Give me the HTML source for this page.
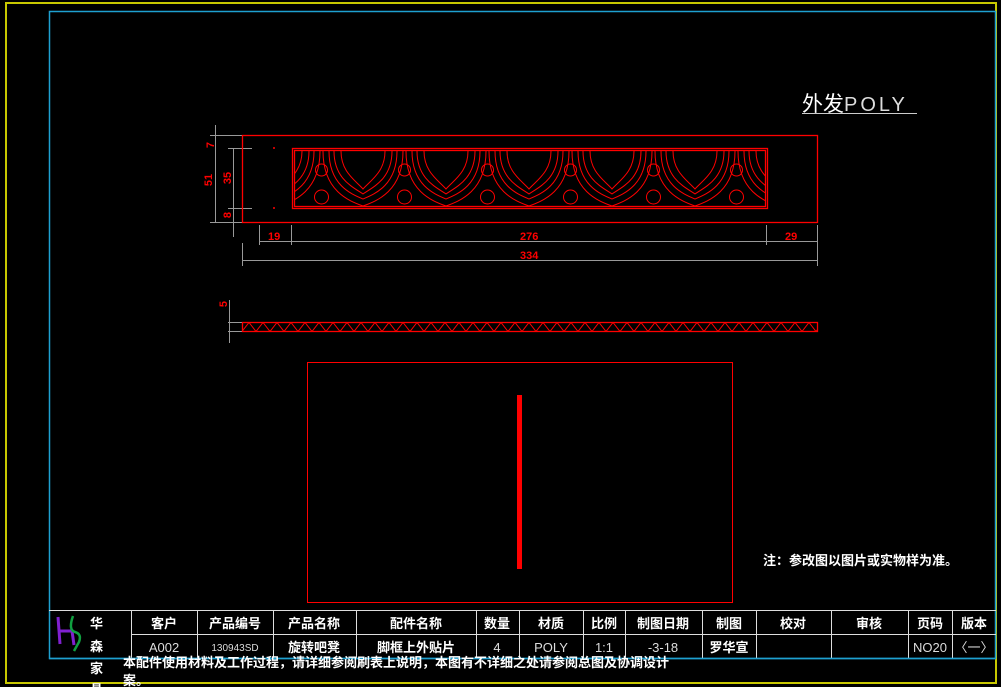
<!DOCTYPE html>
<html><head><meta charset="utf-8"><style>
html,body{margin:0;padding:0;background:#000;width:1001px;height:687px;overflow:hidden}
svg{display:block}
text{font-family:"Liberation Sans","Noto Sans CJK SC",sans-serif}
.w{fill:#fff;font-weight:bold;font-size:13px}
</style></head><body>
<svg width="1001" height="687" viewBox="0 0 1001 687">
<defs>
<g id="arch" fill="none" stroke="#f00" stroke-width="1">
<path d="M-22,151 C-22,172 -8,180 0,189 C8,180 22,172 22,151"/>
<path d="M-29,151 C-29,179 -10,187 0,194 C10,187 29,179 29,151"/>
<path d="M-34,151 C-34,185 -12,194 0,199 C12,194 34,185 34,151"/>
<path d="M-40,151 C-40,191 -14,201 0,206 C14,201 40,191 40,151"/>
<circle cx="-41.5" cy="170" r="6"/>
<circle cx="-41.5" cy="197" r="7"/>
</g>
<pattern id="zz" x="242" y="322" width="14" height="10" patternUnits="userSpaceOnUse">
<path d="M0,9.5 L7,0.5 L14,9.5" fill="none" stroke="#f00" stroke-width="1"/>
</pattern>
</defs>
<rect x="6" y="3" width="990" height="680" fill="none" stroke="#c8c800" stroke-width="2"/>
<rect x="49.5" y="11.5" width="946" height="647" fill="none" stroke="#1ea0d0" stroke-width="1.5"/>
<text x="802" y="111" fill="#fff" font-size="21">外发</text>
<text x="844" y="111" fill="#ddd" font-size="20" letter-spacing="3" font-weight="normal">POLY</text>
<line x1="802" y1="113.5" x2="917" y2="113.5" stroke="#ccc" stroke-width="1"/>
<svg x="294" y="0" width="472" height="210" viewBox="294 0 472 210" overflow="hidden">
<use href="#arch" x="280"/>
<use href="#arch" x="363"/>
<use href="#arch" x="446"/>
<use href="#arch" x="529"/>
<use href="#arch" x="612"/>
<use href="#arch" x="695"/>
<use href="#arch" x="778"/>
</svg>
<g stroke="#999" stroke-width="1" fill="none">
<line x1="210" y1="135.5" x2="242" y2="135.5"/>
<line x1="228" y1="148.5" x2="252" y2="148.5"/>
<line x1="228" y1="208.5" x2="252" y2="208.5"/>
<line x1="210" y1="222.5" x2="242" y2="222.5"/>
<line x1="215.5" y1="125" x2="215.5" y2="222"/>
<line x1="233.5" y1="148" x2="233.5" y2="237"/>
<line x1="259.5" y1="225" x2="259.5" y2="245"/>
<line x1="291.5" y1="225" x2="291.5" y2="245"/>
<line x1="766.5" y1="225" x2="766.5" y2="245"/>
<line x1="817.5" y1="225" x2="817.5" y2="266"/>
<line x1="242.5" y1="243" x2="242.5" y2="266"/>
<line x1="259" y1="241.5" x2="817" y2="241.5"/>
<line x1="242" y1="260.5" x2="817" y2="260.5"/>
<line x1="228" y1="322.5" x2="242" y2="322.5"/>
<line x1="228" y1="331.5" x2="242" y2="331.5"/>
<line x1="229.5" y1="300" x2="229.5" y2="343"/>
</g>
<g fill="none" stroke="#f00" stroke-width="1.3">
<rect x="242.5" y="135.5" width="575" height="87"/>
<rect x="292.5" y="148.5" width="475" height="60"/>
<rect x="294.5" y="150.5" width="471" height="56"/>
</g>
<circle cx="274" cy="148" r="1" fill="#f00"/><circle cx="274" cy="208" r="1" fill="#f00"/>
<g fill="#f00" font-weight="bold" font-size="11">
<text x="268" y="240">19</text>
<text x="520" y="240">276</text>
<text x="785" y="240">29</text>
<text x="520" y="259">334</text>
<text transform="translate(214,145) rotate(-90)" text-anchor="middle">7</text>
<text transform="translate(212,180) rotate(-90)" text-anchor="middle">51</text>
<text transform="translate(231,178) rotate(-90)" text-anchor="middle">35</text>
<text transform="translate(231,215) rotate(-90)" text-anchor="middle">8</text>
<text transform="translate(227,304) rotate(-90)" text-anchor="middle">5</text>
</g>
<rect x="242" y="322" width="576" height="10" fill="url(#zz)"/>
<rect x="242.5" y="322.5" width="575" height="9" fill="none" stroke="#f00" stroke-width="1.3"/>
<rect x="307.5" y="362.5" width="425" height="240" fill="none" stroke="#f00"/>
<rect x="517" y="395" width="5" height="174" fill="#f00"/>
<text x="763" y="565" class="w" font-size="12">注：参改图以图片或实物样为准。</text>
<g stroke="#ddd" stroke-width="1" fill="none">
<line x1="49" y1="610.5" x2="996" y2="610.5"/>
<line x1="131" y1="634.5" x2="996" y2="634.5"/>
<line x1="131.5" y1="610" x2="131.5" y2="658"/>
<line x1="197.5" y1="610" x2="197.5" y2="658"/>
<line x1="273.5" y1="610" x2="273.5" y2="658"/>
<line x1="356.5" y1="610" x2="356.5" y2="658"/>
<line x1="476.5" y1="610" x2="476.5" y2="658"/>
<line x1="519.5" y1="610" x2="519.5" y2="658"/>
<line x1="583.5" y1="610" x2="583.5" y2="658"/>
<line x1="625.5" y1="610" x2="625.5" y2="658"/>
<line x1="702.5" y1="610" x2="702.5" y2="658"/>
<line x1="756.5" y1="610" x2="756.5" y2="658"/>
<line x1="831.5" y1="610" x2="831.5" y2="658"/>
<line x1="908.5" y1="610" x2="908.5" y2="658"/>
<line x1="952.5" y1="610" x2="952.5" y2="658"/>
</g>
<line x1="49" y1="658.5" x2="996" y2="658.5" stroke="#1ea0d0" stroke-width="1.5"/>
<g class="w" text-anchor="middle">
<text x="164" y="628" class="w">客户</text>
<text x="235" y="628" class="w">产品编号</text>
<text x="314" y="628" class="w">产品名称</text>
<text x="416" y="628" class="w">配件名称</text>
<text x="497" y="628" class="w">数量</text>
<text x="551" y="628" class="w">材质</text>
<text x="604" y="628" class="w">比例</text>
<text x="663" y="628" class="w">制图日期</text>
<text x="729" y="628" class="w">制图</text>
<text x="793" y="628" class="w">校对</text>
<text x="869" y="628" class="w">审核</text>
<text x="930" y="628" class="w">页码</text>
<text x="974" y="628" class="w">版本</text>
<text x="314" y="652" class="w">旋转吧凳</text>
<text x="416" y="652" class="w">脚框上外贴片</text>
<text x="729" y="652" class="w">罗华宣</text>
</g>
<g fill="#ddd" font-size="13" text-anchor="middle">
<text x="164" y="652">A002</text>
<text x="235" y="651" font-size="10">130943SD</text>
<text x="497" y="652">4</text>
<text x="551" y="652">POLY</text>
<text x="604" y="652">1:1</text>
<text x="663" y="652">-3-18</text>
<text x="930" y="652">NO20</text>
<text x="974" y="652">〈一〉</text>
</g>
<path d="M58,617 L60,644 M60,631 L72,631 L74,645" stroke="#8020d0" stroke-width="3" fill="none"/>
<path d="M73,616 Q68,630 75,632 Q82,634 79,642 L74,651" stroke="#10a040" stroke-width="2.5" fill="none"/>
<g class="w" font-size="14"><text x="90" y="628">华</text><text x="90" y="651">森</text><text x="90" y="673">家</text><text x="90" y="694">具</text></g>
<text x="123" y="667" class="w" font-size="13">本配件使用材料及工作过程，请详细参阅刷表上说明，本图有不详细之处请参阅总图及协调设计</text>
<text x="123" y="685" class="w" font-size="13">案。</text>
</svg>
</body></html>
